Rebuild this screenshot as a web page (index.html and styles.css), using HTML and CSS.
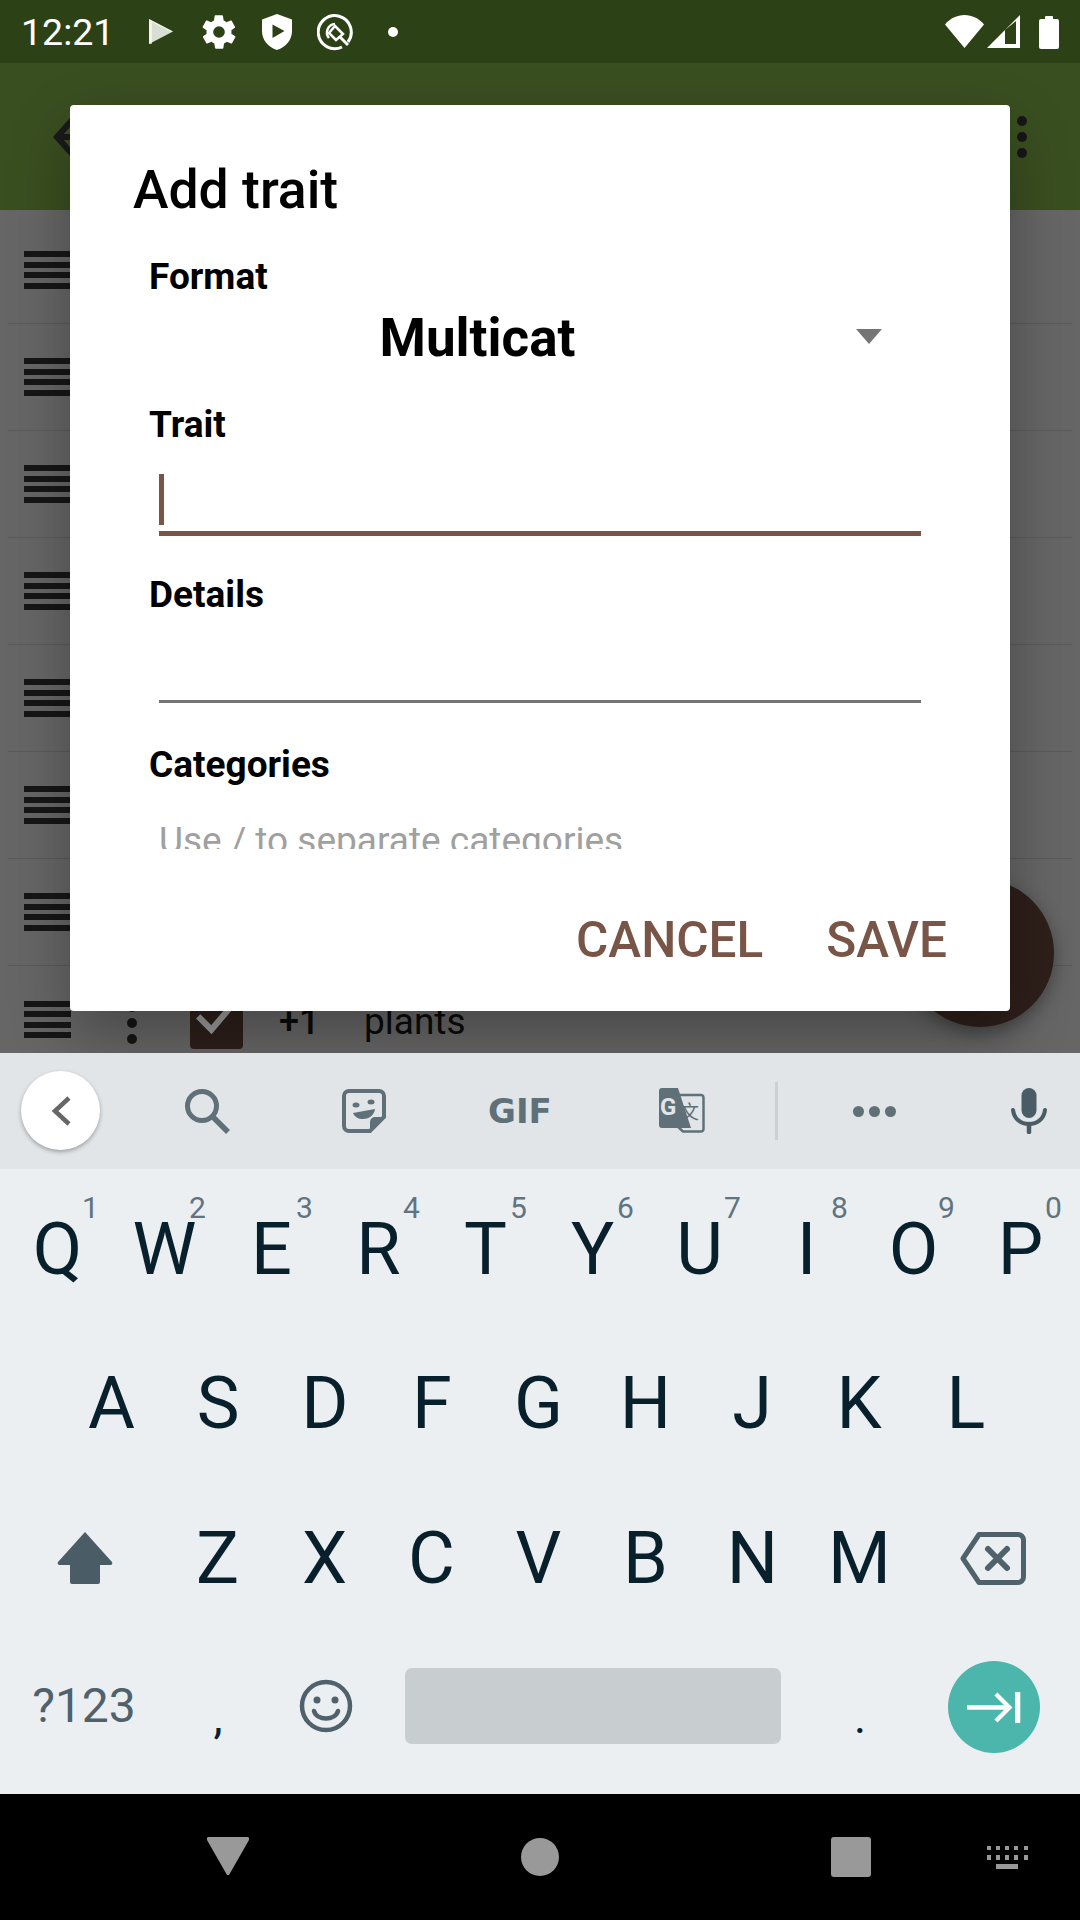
FILE: index.html
```html
<!DOCTYPE html>
<html lang="en">

<head>
    <meta charset="UTF-8">
    <meta name="viewport" content="width=device-width, initial-scale=1.0">
    <title>Add trait</title>
    <link rel="stylesheet" href="styles.css">
</head>

<body>
    <div class="phone">

        <!-- Status bar -->
        <div class="statusbar">
            <span class="clock">12:21</span>
            <svg class="ic-play" viewBox="0 0 24 25"><path d="M0 0L24 12.500L0 25Z" fill="#d9ded3"/><path d="M0 0L24 12.500L21 12.500L3 3V25H0Z" fill="#fff" opacity=".6"/></svg>
            <svg class="ic-gear" viewBox="0 0 24 24"><path fill="#fff" d="M19.400 13c.1-.3.1-.7.1-1s0-.7-.1-1l2.100-1.600c.2-.2.2-.4.1-.6l-2-3.500c-.1-.2-.4-.3-.6-.2l-2.500 1c-.5-.4-1.100-.7-1.700-1l-.4-2.600c0-.3-.2-.5-.5-.5h-4c-.3 0-.5.2-.5.4l-.4 2.700c-.6.2-1.200.6-1.700 1l-2.500-1c-.2-.1-.5 0-.6.2l-2 3.500c-.1.2-.1.4.1.6L4.600 11c-.1.3-.1.7-.1 1s0 .7.1 1l-2.100 1.600c-.2.2-.2.4-.1.6l2 3.500c.1.2.4.3.6.2l2.500-1c.5.4 1.100.7 1.700 1l.4 2.600c0 .3.2.5.5.5h4c.3 0 .5-.2.5-.4l.4-2.700c.6-.2 1.200-.6 1.700-1l2.500 1c.2.1.5 0 .6-.2l2-3.500c.1-.2.1-.4-.1-.6zM12 15.500a3.500 3.500 0 1 1 0-7 3.500 3.500 0 0 1 0 7z"/></svg>
            <svg class="ic-shield" viewBox="0 0 30 36"><path fill-rule="evenodd" fill="#fff" d="M15 0L30 5.500V17C30 26 24 33 15 36C6 33 0 26 0 17V5.500ZM10.500 10.500V24L22.500 17Z"/></svg>
            <svg class="ic-q" viewBox="0 0 36 38" fill="none" stroke="#fff" stroke-width="3"><path d="M25 34A16.500 16.500 0 1 1 31 29"/><path d="M18 11A8.500 8.500 0 0 0 12 25" stroke-width="2.500"/><path d="M18 13L26 21L19 27L12 20Z" stroke-width="2.500"/><path d="M23 24L31 32" stroke-width="3"/></svg>
            <span class="status-dot"></span>
            <span class="status-right">
                <svg class="ic-wifi" viewBox="0 0 39 33"><path fill="#fff" d="M0 9.500C5 3.500 12 0 19.500 0S34 3.500 39 9.500L19.500 33Z"/></svg>
                <svg class="ic-signal" viewBox="0 0 33 33"><path fill-rule="evenodd" fill="#fff" d="M33 0V33H0ZM18 15V29H29V6Z"/></svg>
                <svg class="ic-battery" viewBox="0 0 20 34"><path fill="#fff" d="M6 2a1 1 0 0 1 1-1h6a1 1 0 0 1 1 1v2h4a2 2 0 0 1 2 2v26a2 2 0 0 1-2 2H2a2 2 0 0 1-2-2V6a2 2 0 0 1 2-2h4z"/></svg>
            </span>
        </div>

        <div class="content">
            <!-- App bar (dimmed behind the dialog) -->
            <div class="appbar">
                <svg class="ic-arrow" viewBox="0 0 40 40" fill="none" stroke="#1a1a1a" stroke-width="6"><path d="M20 2L4 20L20 38"/><path d="M4 20H40"/></svg>
                <span class="kebab"><i></i><i></i><i></i></span>
            </div>

            <!-- List behind the dialog -->
            <div class="list">
                <div class="row"><span class="drag"><i></i><i></i><i></i><i></i></span></div>
                <div class="row"><span class="drag"><i></i><i></i><i></i><i></i></span></div>
                <div class="row"><span class="drag"><i></i><i></i><i></i><i></i></span></div>
                <div class="row"><span class="drag"><i></i><i></i><i></i><i></i></span></div>
                <div class="row"><span class="drag"><i></i><i></i><i></i><i></i></span></div>
                <div class="row"><span class="drag"><i></i><i></i><i></i><i></i></span></div>
                <div class="row"><span class="drag"><i></i><i></i><i></i><i></i></span></div>
                <div class="row row-last">
                    <span class="drag"><i></i><i></i><i></i><i></i></span>
                    <span class="row-menu"><i></i><i></i><i></i></span>
                    <span class="check">
                        <svg viewBox="0 0 52 52" fill="none" stroke="#9b9b9b" stroke-width="6"><path d="M8 20L21 33L44 6"/></svg>
                    </span>
                    <span class="count">+1</span>
                    <span class="trait-name">plants</span>
                </div>
            </div>

            <div class="fab"></div>

            <!-- Dialog -->
            <div class="dialog">
                <h1 class="dialog-title">Add trait</h1>
                <div class="dialog-body">
                    <label class="field-label">Format</label>
                    <div class="spinner">
                        <span class="spinner-value">Multicat</span>
                        <span class="spinner-arrow"></span>
                    </div>
                    <div class="field">
                        <label class="field-label">Trait</label>
                        <div class="input input-focus"><span class="cursor"></span></div>
                    </div>
                    <div class="field">
                        <label class="field-label">Details</label>
                        <div class="input"></div>
                    </div>
                    <div class="field">
                        <label class="field-label">Categories</label>
                        <div class="placeholder">Use / to separate categories</div>
                    </div>
                </div>
                <div class="dialog-actions">
                    <span class="action">CANCEL</span>
                    <span class="action">SAVE</span>
                </div>
            </div>
        </div>

        <!-- Keyboard -->
        <div class="kb-toolbar">
            <span class="kb-back">
                <svg viewBox="0 0 24 32" fill="none" stroke="#666" stroke-width="4.500"><path d="M20 3L6 16L20 29"/></svg>
            </span>
            <svg class="tool tool-search" viewBox="0 0 46 46" fill="none" stroke="#5f7078" stroke-width="5"><circle cx="18" cy="18" r="14.500"/><path d="M28 28L44 44" stroke-width="5.500"/></svg>
            <svg class="tool tool-sticker" viewBox="0 0 44 44"><path fill="none" stroke="#5f7078" stroke-width="4" d="M7 2H37a5 5 0 0 1 5 5V28L28 42H7a5 5 0 0 1-5-5V7a5 5 0 0 1 5-5z"/><path fill="#5f7078" d="M42 28L28 42V33a5 5 0 0 1 5-5z"/><ellipse cx="14" cy="16" rx="3.500" ry="2.500" fill="#5f7078"/><ellipse cx="29" cy="13" rx="3.500" ry="2.500" fill="#5f7078"/><path fill="#5f7078" d="M11 24L33 20C32 27 26 30 21 30C16 30 13 28 11 24Z"/></svg>
            <span class="tool-gif">GIF</span>
            <svg class="tool tool-translate" viewBox="0 0 46 46"><path fill="#e1e5e8" stroke="#5f7078" stroke-width="2.500" d="M18 7H42a2.500 2.500 0 0 1 2.500 2.500V41a2.500 2.500 0 0 1-2.500 2.500H24L18 38z"/><path fill="#5f7078" d="M3 0H19L32 40H3a3 3 0 0 1-3-3V3a3 3 0 0 1 3-3z"/><text class="tr-g" x="1" y="27">G</text><text class="tr-x" x="21" y="31">文</text></svg>
            <span class="tool-sep"></span>
            <span class="tool-dots"><i></i><i></i><i></i></span>
            <svg class="tool tool-mic" viewBox="0 0 36 46"><rect x="10.500" y="0" width="15" height="30" rx="7.500" fill="#4a5c66"/><path d="M2 22C3 31 10 36 18 36S33 31 34 22" fill="none" stroke="#4a5c66" stroke-width="4" stroke-linecap="round"/><path d="M18 36V44" stroke="#4a5c66" stroke-width="4.500" stroke-linecap="round"/></svg>
        </div>

        <div class="kb">
            <div class="kb-row kb-row-1">
                <span class="key">Q<b>1</b></span>
                <span class="key">W<b>2</b></span>
                <span class="key">E<b>3</b></span>
                <span class="key">R<b>4</b></span>
                <span class="key">T<b>5</b></span>
                <span class="key">Y<b>6</b></span>
                <span class="key">U<b>7</b></span>
                <span class="key">I<b>8</b></span>
                <span class="key">O<b>9</b></span>
                <span class="key">P<b>0</b></span>
            </div>
            <div class="kb-row kb-row-2">
                <span class="key">A</span>
                <span class="key">S</span>
                <span class="key">D</span>
                <span class="key">F</span>
                <span class="key">G</span>
                <span class="key">H</span>
                <span class="key">J</span>
                <span class="key">K</span>
                <span class="key">L</span>
            </div>
            <div class="kb-row kb-row-3">
                <span class="key key-shift">
                    <svg viewBox="0 0 56 52"><path fill="#4a5c66" d="M28 0L55 30a2 2 0 0 1-1.500 3H43V50a2 2 0 0 1-2 2H15a2 2 0 0 1-2-2V33H2.500a2 2 0 0 1-1.500-3z"/></svg>
                </span>
                <span class="key">Z</span>
                <span class="key">X</span>
                <span class="key">C</span>
                <span class="key">V</span>
                <span class="key">B</span>
                <span class="key">N</span>
                <span class="key">M</span>
                <span class="key key-del">
                    <svg viewBox="0 0 66 53" fill="none" stroke="#4f626c" stroke-width="5"><path d="M19 2.500H58a5.500 5.500 0 0 1 5.500 5.500V45a5.500 5.500 0 0 1-5.500 5.500H19L3 26.500Z" stroke-linejoin="round"/><path d="M28 17L47 36M47 17L28 36" stroke-width="6" stroke-linecap="round"/></svg>
                </span>
            </div>
            <div class="kb-row kb-row-4">
                <span class="key-sym">?123</span>
                <span class="key-punct key-comma">,</span>
                <span class="key-emoji">
                    <svg viewBox="0 0 54 54" fill="none" stroke="#4f626c" stroke-width="4.500"><circle cx="27" cy="27" r="24"/><circle cx="18" cy="21" r="3.500" fill="#4f626c" stroke="none"/><circle cx="36" cy="21" r="3.500" fill="#4f626c" stroke="none"/><path d="M15 32C18 42 36 42 39 32" stroke-linecap="round"/></svg>
                </span>
                <span class="key-space"></span>
                <span class="key-punct key-period">.</span>
                <span class="key-enter">
                    <svg viewBox="0 0 56 32" fill="none" stroke="#fff" stroke-width="4.500"><path d="M0 16H44"/><path d="M30 2L44 16L30 30"/><path d="M52.500 0V32" stroke-width="5.500"/></svg>
                </span>
            </div>
        </div>

        <!-- Navigation bar -->
        <div class="navbar">
            <svg class="nav-back" viewBox="0 0 42 38"><path fill="#999" d="M2 0H40a2 2 0 0 1 2 3L22 38h-2L0 3a2 2 0 0 1 2-3z"/></svg>
            <span class="nav-home"></span>
            <span class="nav-recent"></span>
            <svg class="nav-kb" viewBox="0 0 41 23" fill="#999"><path d="M0 0h4v4H0zM9 0h4v4H9zM18 0h4v4h-4zM27 0h4v4h-4zM37 0h4v4h-4zM0 9h4v5H0zM9 9h4v5H9zM18 9h4v5h-4zM27 9h4v5h-4zM37 9h4v5h-4zM9 18h22v5H9z"/></svg>
        </div>

    </div>
</body>

</html>
```

FILE: styles.css
```css
* {
    box-sizing: border-box;
}

body {
    margin: 0;
    font-family: Roboto, "Liberation Sans", sans-serif;
}

.phone {
    width: 1080px;
    height: 1920px;
    display: flex;
    flex-direction: column;
    overflow: hidden;
}

/* Status bar */
.statusbar {
    height: 63px;
    background-color: #2d4116;
    display: flex;
    align-items: center;
    color: #fff;
    padding-left: 21px;
}

.clock {
    font-size: 37.500px;
    width: 128px;
}

.ic-play {
    width: 24px;
    height: 25px;
    margin-right: 30px;
}

.ic-gear {
    width: 40px;
    height: 40px;
    margin-left: -4px;
    margin-right: 23px;
}

.ic-shield {
    width: 30px;
    height: 36px;
    margin-right: 25px;
}

.ic-q {
    width: 36px;
    height: 38px;
    margin-right: 35px;
}

.status-dot {
    width: 10px;
    height: 10px;
    border-radius: 50%;
    background-color: #fff;
}

.status-right {
    margin-left: auto;
    display: flex;
    align-items: center;
    padding-right: 21px;
}

.ic-wifi {
    width: 39px;
    height: 33px;
    margin-right: 3px;
}

.ic-signal {
    width: 33px;
    height: 33px;
    margin-right: 19px;
}

.ic-battery {
    width: 20px;
    height: 34px;
}

/* Behind the dialog */
.content {
    position: relative;
    height: 990px;
    background-color: #666;
    overflow: hidden;
}

.appbar {
    height: 147px;
    background-color: #3a4f20;
    display: flex;
    align-items: center;
    justify-content: space-between;
    padding: 0 53px;
}

.ic-arrow {
    width: 40px;
    height: 40px;
}

.kebab {
    display: flex;
    flex-direction: column;
    gap: 6px;
}

.kebab i,
.row-menu i {
    display: block;
    width: 10px;
    height: 10px;
    border-radius: 50%;
    background-color: #161616;
}

.list {
    padding-top: 7px;
}

.row {
    height: 107px;
    margin: 0 8px;
    padding-left: 16px;
    border-bottom: 1px solid #5a5a5a;
    display: flex;
    align-items: center;
}

.row-last {
    border-bottom: none;
}

.drag {
    width: 47px;
    display: flex;
    flex-direction: column;
    gap: 4.500px;
    flex-shrink: 0;
}

.drag i {
    display: block;
    height: 6px;
    background-color: #161616;
}

.row-menu {
    display: flex;
    flex-direction: column;
    gap: 6px;
    margin-left: 56px;
    margin-top: 6px;
}

.check {
    width: 53px;
    height: 53px;
    border-radius: 4px;
    background-color: #2e1f1a;
    margin-left: 53px;
    margin-top: 6px;
    flex-shrink: 0;
}

.check svg {
    display: block;
}

.count {
    font-size: 36px;
    font-weight: 500;
    color: #0a0a0a;
    margin-left: 36px;
    margin-top: 4px;
    width: 85px;
}

.trait-name {
    font-size: 37px;
    color: #0a0a0a;
    margin-top: 4px;
}

.fab {
    position: absolute;
    left: 906px;
    top: 816px;
    width: 148px;
    height: 148px;
    border-radius: 50%;
    background-color: #2e1f1a;
    box-shadow: 0 6px 18px rgba(0, 0, 0, .35);
}

/* Dialog */
.dialog {
    position: absolute;
    left: 70px;
    top: 42px;
    width: 940px;
    height: 906px;
    background-color: #fff;
    border-radius: 4px;
    box-shadow: 0 24px 60px rgba(0, 0, 0, .3);
    padding-top: 55px;
}

.dialog-title {
    margin: 0 0 35px 63px;
    font-size: 53.500px;
    font-weight: 500;
    line-height: 60px;
    color: #000;
}

.dialog-body {
    height: 594px;
    padding: 0 89px 0 79px;
    overflow: hidden;
}

.field-label {
    display: block;
    font-size: 37px;
    font-weight: 700;
    line-height: 44px;
    color: #000;
}

.spinner {
    height: 104px;
    padding-bottom: 26px;
    display: flex;
    align-items: center;
}

.spinner-value {
    flex: 1;
    text-align: center;
    font-size: 53px;
    font-weight: 700;
    color: #000;
}

.spinner-arrow {
    width: 0;
    height: 0;
    border-left: 13.500px solid transparent;
    border-right: 13.500px solid transparent;
    border-top: 15px solid #757575;
    margin-left: 50px;
    margin-right: 39px;
    margin-top: -3px;
}

.field {
    height: 170px;
}

.input {
    margin-left: 10px;
    height: 86px;
    border-bottom: 3px solid #757575;
}

.input-focus {
    height: 89px;
    border-bottom: 5px solid #795548;
    padding-top: 27px;
}

.cursor {
    display: block;
    width: 5px;
    height: 51px;
    background-color: #795548;
}

.placeholder {
    margin: 32px 0 0 10px;
    font-size: 37px;
    line-height: 44px;
    color: #a0a0a0;
}

.dialog-actions {
    display: flex;
    justify-content: flex-end;
    gap: 63px;
    padding: 61px 63px 0 0;
}

.action {
    font-size: 49.500px;
    font-weight: 500;
    line-height: 60px;
    color: #795548;
}

/* Keyboard */
.kb-toolbar {
    height: 116px;
    background-color: #e1e5e8;
    position: relative;
    display: flex;
    align-items: center;
}

.kb-back {
    width: 79px;
    height: 79px;
    margin-left: 21px;
    margin-top: -1px;
    border-radius: 50%;
    background-color: #fff;
    box-shadow: 0 2px 4px rgba(0, 0, 0, .3);
    display: flex;
    align-items: center;
    justify-content: center;
}

.kb-back svg {
    width: 24px;
    height: 32px;
}

.tool {
    flex-shrink: 0;
}

.tool-search {
    width: 46px;
    height: 46px;
    margin-left: 84px;
}

.tool-sticker {
    width: 44px;
    height: 44px;
    margin-left: 112px;
}

.tool-gif {
    font-family: "DejaVu Sans", sans-serif;
    font-weight: 700;
    font-size: 34px;
    color: #5f7078;
    width: 62px;
    margin-left: 102px;
    text-align: center;
}

.tool-translate {
    width: 46px;
    height: 46px;
    margin-left: 109px;
}

.tr-g {
    font-family: Roboto, sans-serif;
    font-weight: 700;
    font-size: 24px;
    fill: #e1e5e8;
}

.tr-x {
    font-family: "Noto Sans CJK SC", sans-serif;
    font-size: 19px;
    fill: #5f7078;
}

.tool-sep {
    width: 3px;
    height: 58px;
    background-color: #ccd0d3;
    margin-left: 70px;
}

.tool-dots {
    display: flex;
    gap: 5px;
    margin-left: 75px;
}

.tool-dots i {
    display: block;
    width: 11px;
    height: 11px;
    border-radius: 50%;
    background-color: #5f7078;
}

.tool-mic {
    width: 36px;
    height: 46px;
    margin-left: 115px;
}

.kb {
    height: 625px;
    background-color: #eceff2;
}

.kb-row {
    height: 155px;
    display: flex;
    padding-top: 3px;
}

.kb-row-1 {
    padding: 5px 0 0 4px;
}

.key {
    position: relative;
    width: 107px;
    display: flex;
    align-items: center;
    justify-content: center;
    font-size: 72px;
    color: #08202c;
}

.key b {
    position: absolute;
    top: 16px;
    left: 78px;
    font-size: 30px;
    font-weight: 400;
    color: #607480;
}

.kb-row-2 {
    padding-left: 58px;
}

.kb-row-2 .key {
    width: 106.800px;
}

.key-shift {
    width: 164px;
    padding-left: 6px;
}

.key-shift svg {
    width: 56px;
    height: 52px;
}

.key-del {
    width: 160px;
}

.key-del svg {
    width: 66px;
    height: 53px;
}

.kb-row-4 {
    height: 143px;
    align-items: center;
    padding-top: 0;
}

.key-sym {
    width: 164px;
    padding-left: 4px;
    text-align: center;
    font-size: 48px;
    color: #4f626c;
}

.key-punct {
    width: 0;
    flex-shrink: 0;
    display: flex;
    justify-content: center;
    font-size: 46px;
    color: #08202c;
    padding-top: 22px;
}

.key-comma {
    margin-left: 54px;
}

.key-emoji {
    margin-left: 81px;
    width: 54px;
    height: 54px;
}

.key-emoji svg {
    display: block;
}

.key-space {
    width: 376px;
    height: 76px;
    margin-left: 52px;
    border-radius: 7px;
    background-color: #c8cdd0;
}

.key-period {
    margin-left: 79px;
}

.key-enter {
    width: 92px;
    height: 92px;
    margin-left: 88px;
    margin-top: 3px;
    border-radius: 50%;
    background-color: #4db6ac;
    display: flex;
    align-items: center;
    justify-content: center;
}

.key-enter svg {
    width: 54px;
    height: 31px;
}

/* Navigation bar */
.navbar {
    height: 126px;
    background-color: #000;
    display: flex;
    align-items: center;
    position: relative;
}

.nav-back {
    width: 42px;
    height: 38px;
    margin-left: 207px;
    margin-top: -2px;
}

.nav-home {
    width: 38px;
    height: 38px;
    margin-left: 272px;
    border-radius: 50%;
    background-color: #999;
}

.nav-recent {
    width: 40px;
    height: 40px;
    margin-left: 272px;
    border-radius: 3px;
    background-color: #999;
}

.nav-kb {
    width: 41px;
    height: 23px;
    margin-left: 116px;
    margin-top: 1px;
}
```
